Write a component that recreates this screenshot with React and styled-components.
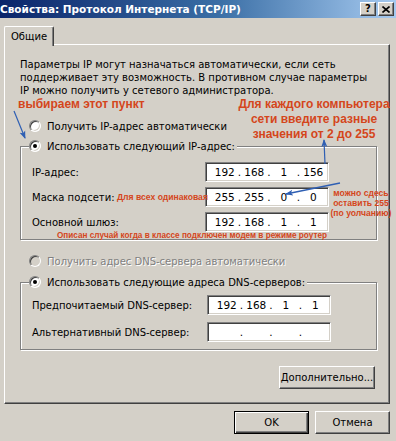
import React from "react";
import styled, { createGlobalStyle, css } from "styled-components";

const GlobalStyle = createGlobalStyle`
  html, body { margin: 0; padding: 0; background: #d4d0c8; }
  body { font-family: "DejaVu Sans", "Liberation Sans", sans-serif; font-size: 10px; color: #000; }
`;

const RED = "#d4461c";
const BLUE = "#2f5fb3";

const Window = styled.div`
  position: relative;
  width: 396px;
  height: 441px;
  background: #d4d0c8;
  overflow: hidden;
`;

const TitleBar = styled.div`
  height: 18px;
  display: flex;
  align-items: center;
  justify-content: space-between;
  padding: 0 2px 0 0;
  background: linear-gradient(to right, #0a246a 0%, #3a6ea5 55%, #a6caf0 100%);
`;

const Title = styled.div`
  color: #fff;
  font-weight: bold;
  font-size: 10.5px;
  white-space: nowrap;
`;

const Caption = styled.div`
  display: flex;
  gap: 2px;
`;

const CapButton = styled.div`
  width: 16px;
  height: 14px;
  box-sizing: border-box;
  display: grid;
  place-items: center;
  background: #d4d0c8;
  border: 1px solid;
  border-color: #fff #404040 #404040 #fff;
  box-shadow: inset -1px -1px 0 #808080;
  font-weight: bold;
  font-size: 10px;
  line-height: 1;
`;

const Body = styled.div`
  padding: 7px 6px 0 4px;
`;

const Tabs = styled.div`
  height: 19px;
  display: flex;
  align-items: flex-end;
`;

const Tab = styled.div`
  position: relative;
  z-index: 1;
  width: 50px;
  height: 20px;
  margin-bottom: -2px;
  box-sizing: border-box;
  display: grid;
  place-items: center;
  background: #d4d0c8;
  border: 1px solid;
  border-color: #fff #404040 transparent #fff;
  border-bottom: none;
  border-radius: 2px 2px 0 0;
  box-shadow: inset -1px 0 0 #808080;
  padding-bottom: 1px;
`;

const Panel = styled.div`
  width: 386px;
  height: 360px;
  box-sizing: border-box;
  border: 1px solid;
  border-color: #fff #404040 #404040 #fff;
  box-shadow: inset -1px -1px 0 #808080;
  padding: 13px 12px 0 15px;
  display: flex;
  flex-direction: column;
`;

const Intro = styled.p`
  margin: 0 0 21px 0;
  line-height: 13px;
`;

const RadioRow = styled.div`
  height: 16px;
  display: flex;
  align-items: center;
  gap: 6px;
  padding-left: ${(p) => p.$indent ?? 9}px;
  margin-top: ${(p) => p.$top ?? 0}px;
  color: ${(p) => (p.$disabled ? "#808080" : "#000")};
  text-shadow: ${(p) => (p.$disabled ? "1px 1px 0 #fff" : "none")};
  white-space: nowrap;
`;

const RadioDot = styled.span`
  flex: none;
  width: 12px;
  height: 12px;
  box-sizing: border-box;
  border-radius: 50%;
  border: 1px solid;
  border-color: #808080 #fff #fff #808080;
  background: ${(p) => (p.$disabled ? "#d4d0c8" : "#fff")};
  box-shadow: inset 1px 1px 0 #404040, inset -1px -1px 0 #d4d0c8;
  display: grid;
  place-items: center;
  &::after {
    content: "";
    width: 4px;
    height: 4px;
    border-radius: 50%;
    background: #000;
    display: ${(p) => (p.$checked ? "block" : "none")};
  }
`;

const Group = styled.fieldset`
  margin: ${(p) => p.$top}px 0 0 0;
  padding: ${(p) => p.$pad};
  border: 1px solid #808080;
  box-shadow: 1px 1px 0 #fff, inset 1px 1px 0 #fff;
  width: 357px;
  box-sizing: border-box;
  display: flex;
  flex-direction: column;
  gap: ${(p) => p.$gap}px;
`;

const Legend = styled.legend`
  padding: 0 2px 0 0;
  margin-left: -3px;
  background: #d4d0c8;
`;

const FieldRow = styled.div`
  display: grid;
  grid-template-columns: ${(p) => p.$label}px 124px;
  align-items: center;
`;

const IpBox = styled.div`
  width: 124px;
  height: 20px;
  box-sizing: border-box;
  border: 1px solid;
  border-color: #808080 #fff #fff #808080;
  box-shadow: inset 1px 1px 0 #404040, inset -1px -1px 0 #d4d0c8;
  background: #fff;
  display: grid;
  grid-template-columns: 1fr 4px 1fr 4px 1fr 4px 1fr;
  align-items: center;
  padding: 0 2px 0 6px;
  font-size: 10.5px;
`;

const Octet = styled.span`
  text-align: center;
`;

const Dot = styled.span`
  text-align: center;
`;

const ButtonRow = styled.div`
  display: flex;
  justify-content: flex-end;
  gap: 6px;
  margin: ${(p) => p.$margin};
`;

const Button = styled.button`
  width: ${(p) => p.$w}px;
  height: 23px;
  padding: 0;
  font: inherit;
  color: #000;
  background: #d4d0c8;
  border: 1px solid;
  border-color: #fff #404040 #404040 #fff;
  box-shadow: inset -1px -1px 0 #808080;
  ${(p) =>
    p.$default &&
    css`
      border-color: #000;
      box-shadow: inset 1px 1px 0 #fff, inset -1px -1px 0 #404040,
        inset -2px -2px 0 #808080;
    `}
`;

const Overlay = styled.div`
  position: absolute;
  inset: 0;
  pointer-events: none;
`;

const Note = styled.div`
  position: absolute;
  left: ${(p) => p.$x}px;
  top: ${(p) => p.$y}px;
  width: ${(p) => (p.$w ? `${p.$w}px` : "auto")};
  color: ${RED};
  font-family: "Liberation Sans", Arial, sans-serif;
  font-weight: bold;
  font-size: ${(p) => p.$size}px;
  line-height: ${(p) => p.$lh}px;
  text-align: ${(p) => (p.$w ? "center" : "left")};
  white-space: nowrap;
`;

const Arrows = styled.svg`
  position: absolute;
  left: 0;
  top: 0;
`;

const Radio = ({ checked, disabled, children, indent, top }) => (
  <RadioRow $disabled={disabled} $indent={indent} $top={top}>
    <RadioDot $checked={checked} $disabled={disabled} />
    <span>{children}</span>
  </RadioRow>
);

const IpField = ({ label, value = ["", "", "", ""], labelWidth = 173 }) => (
  <FieldRow $label={labelWidth}>
    <span>{label}</span>
    <IpBox>
      {value.map((v, i) => (
        <React.Fragment key={i}>
          {i > 0 && <Dot>.</Dot>}
          <Octet>{v}</Octet>
        </React.Fragment>
      ))}
    </IpBox>
  </FieldRow>
);

export default function App() {
  return (
    <>
      <GlobalStyle />
      <Window>
        <TitleBar>
          <Title>Свойства: Протокол Интернета (TCP/IP)</Title>
          <Caption>
            <CapButton>?</CapButton>
            <CapButton>
              <svg width="8" height="7" viewBox="0 0 8 7">
                <path d="M0.5 0.5 L7.5 6.5 M7.5 0.5 L0.5 6.5" stroke="#000" strokeWidth="1.6" />
              </svg>
            </CapButton>
          </Caption>
        </TitleBar>
        <Body>
          <Tabs>
            <Tab>Общие</Tab>
          </Tabs>
          <Panel>
            <Intro>
              Параметры IP могут назначаться автоматически, если сеть
              <br />
              поддерживает эту возможность. В противном случае параметры
              <br />
              IP можно получить у сетевого администратора.
            </Intro>
            <Radio>Получить IP-адрес автоматически</Radio>
            <Group $top={4} $pad="8px 0 7px 11px" $gap={5}>
              <Legend>
                <Radio checked indent={0}>
                  Использовать следующий IP-адрес:
                </Radio>
              </Legend>
              <IpField label="IP-адрес:" value={["192", "168", "1", "156"]} />
              <IpField label="Маска подсети:" value={["255", "255", "0", "0"]} />
              <IpField label="Основной шлюз:" value={["192", "168", "1", "1"]} />
            </Group>
            <Radio disabled top={13}>
              Получить адрес DNS-сервера автоматически
            </Radio>
            <Group $top={5} $pad="5px 0 7px 11px" $gap={7}>
              <Legend>
                <Radio checked indent={0}>
                  Использовать следующие адреса DNS-серверов:
                </Radio>
              </Legend>
              <IpField labelWidth={175} label="Предпочитаемый DNS-сервер:" value={["192", "168", "1", "1"]} />
              <IpField labelWidth={175} label="Альтернативный DNS-сервер:" />
            </Group>
            <ButtonRow $margin="16px 2px 0 0">
              <Button $w={96}>Дополнительно...</Button>
            </ButtonRow>
          </Panel>
          <ButtonRow $margin="7px 0 0 0">
            <Button $w={75} $default>
              OK
            </Button>
            <Button $w={75}>Отмена</Button>
          </ButtonRow>
        </Body>
        <Overlay>
          <Arrows width="396" height="441" viewBox="0 0 396 441">
            <defs>
              <marker id="head" markerWidth="8" markerHeight="8" refX="7" refY="4" orient="auto" markerUnits="userSpaceOnUse">
                <path d="M0 1 L8 4 L0 7 L2 4 Z" fill={BLUE} />
              </marker>
            </defs>
            <line x1="14" y1="111" x2="25" y2="138" stroke={BLUE} strokeWidth="1.2" markerEnd="url(#head)" />
            <line x1="325" y1="164" x2="324" y2="140" stroke={BLUE} strokeWidth="1.2" markerEnd="url(#head)" />
            <line x1="340" y1="183" x2="286" y2="194" stroke={BLUE} strokeWidth="1.4" markerEnd="url(#head)" />
          </Arrows>
          <Note $x={18} $y={97} $size={12} $lh={14}>
            выбираем этот пункт
          </Note>
          <Note $x={234} $y={97} $w={160} $size={12} $lh={15}>
            Для каждого компьютера
            <br />
            сети введите разные
            <br />
            значения от 2 до 255
          </Note>
          <Note $x={117} $y={192} $size={8.6} $lh={10}>
            Для всех одинаковая
          </Note>
          <Note $x={326} $y={188} $w={70} $size={8.6} $lh={10}>
            можно сдесь
            <br />
            оставить 255
            <br />
            (по уолчанию)
          </Note>
          <Note $x={57} $y={231} $size={8.2} $lh={10}>
            Описан случай когда в классе подключен модем в режиме роутер
          </Note>
        </Overlay>
      </Window>
    </>
  );
}
